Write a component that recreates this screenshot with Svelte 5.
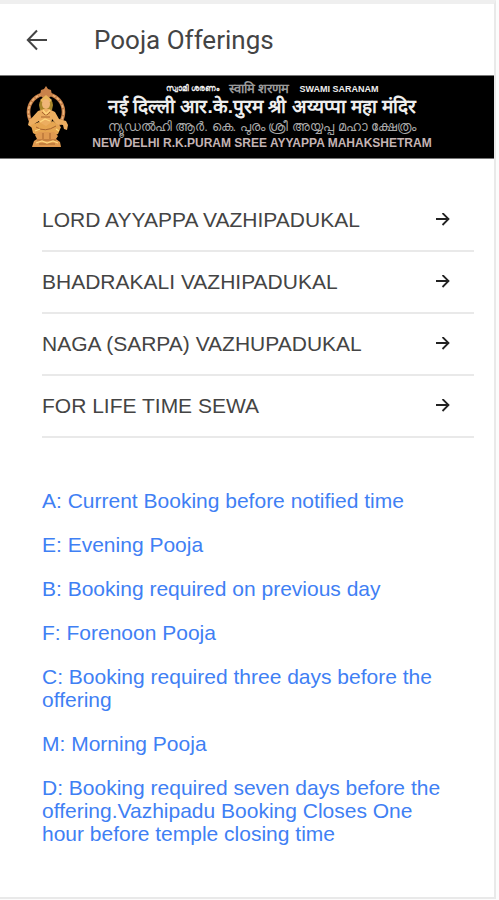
<script>
  const offerings = [
    'LORD AYYAPPA VAZHIPADUKAL',
    'BHADRAKALI VAZHIPADUKAL',
    'NAGA (SARPA) VAZHUPADUKAL',
    'FOR LIFE TIME SEWA'
  ];

  const notes = [
    'A: Current Booking before notified time',
    'E: Evening Pooja',
    'B: Booking required on previous day',
    'F: Forenoon Pooja',
    'C: Booking required three days before the offering',
    'M: Morning Pooja',
    'D: Booking required seven days before the offering.Vazhipadu Booking Closes One hour before temple closing time'
  ];
</script>

<div class="page">
  <header>
    <button class="back" aria-label="Back">
      <svg width="22" height="22" viewBox="0 0 22 22" aria-hidden="true">
        <path d="M21 11H2M11 1.5 1.8 11 11 20.5" fill="none" stroke="#444" stroke-width="2" />
      </svg>
    </button>
    <h1>Pooja Offerings</h1>
  </header>

  <div class="banner">
    <svg class="deity" width="44" height="62" viewBox="0 0 44 62" aria-hidden="true">
      <ellipse cx="20" cy="26" rx="17.5" ry="18" fill="none" stroke="#c27c45" stroke-width="3.6" />
      <ellipse cx="20" cy="26" rx="17.5" ry="18" fill="none" stroke="#efb57a" stroke-width="1.6" stroke-dasharray="3 1.5" />
      <path d="M20 0l2 3 3 1 1 5-3 3h-6l-3-3 1-5 3-1z" fill="#c9824a" />
      <path d="M13 19q0-6 7-7 7 1 7 7l-1 5H14z" fill="#a8862a" />
      <path d="M14 14l6-5 6 5-2 2h-8z" fill="#eab75b" />
      <ellipse cx="20" cy="18" rx="4" ry="5" fill="#efb577" />
      <path d="M12 25l6-2h5l6 3 4 7 7 2 2 4-1 5-3-1-1-4-7-1-4-5-1 8H14l-1-6-5 3 6 4-3 3-9-6 1-4z" fill="#ecae60" />
      <path d="M5 39l8-3 7 4 7-5 8 6-3 7-5 2-7-4-8 4-5-3z" fill="#e6a550" />
      <path d="M9 49l4-3h15l4 4-2 3 4 3 1 5H6l2-6 3-2z" fill="#e09a50" />
      <path d="M16 26q4 6 8 0M15 31h9M10 41q9 6 20-1M11 54h19M17 47v6M24 47v6M13 58h16" fill="none" stroke="#a8642e" stroke-width="1" />
      <path d="M17 24l3 4 4-4M14 36l5-3 5 2M9 45l5-2M30 43l3 2M10 57l6-2 5 2 6-2 5 2" fill="none" stroke="#ffd77d" stroke-width="1.3" />
    </svg>
    <div class="names">
      <div class="greeting">
        <span class="mal" lang="ml">സ്വാമി ശരണം</span>
        <span class="hin" lang="hi">स्वामि शरणम</span>
        <span class="eng">SWAMI SARANAM</span>
      </div>
      <div class="hindi" lang="hi">नई दिल्ली आर.के.पुरम श्री अय्यप्पा महा मंदिर</div>
      <div class="malayalam" lang="ml">ന്യൂഡൽഹി ആർ. കെ. പുരം ശ്രീ അയ്യപ്പ മഹാ ക്ഷേത്രം</div>
      <div class="english">NEW DELHI R.K.PURAM SREE AYYAPPA MAHAKSHETRAM</div>
    </div>
  </div>

  <main>
    <ul>
      {#each offerings as name}
        <li>
          <button class="offering">
            <span>{name}</span>
            <svg width="14" height="14" viewBox="0 0 14 14" aria-hidden="true">
              <path d="M0 6h12M6.5 0l6 6-6 6" fill="none" stroke="#222" stroke-width="1.8" />
            </svg>
          </button>
        </li>
      {/each}
    </ul>
    <section>
      {#each notes as note}
        <p>{note}</p>
      {/each}
    </section>
  </main>
</div>

<style>
  :global(body) {
    background: #fcfcfc;
  }
  .page {
    box-sizing: border-box;
    min-height: calc(100vh - 1px);
    margin-right: 3px;
    border-top: 4px solid #efefef;
    border-right: 2px solid #e9e9e9;
    border-bottom: 2px solid #e9e9e9;
    background: #fff;
    color: #444;
    font-family: 'Liberation Sans', Arial, sans-serif;
  }
  header {
    display: flex;
    align-items: center;
    gap: 46px;
    height: 71px;
    padding-left: 26px;
  }
  button {
    display: flex;
    align-items: center;
    padding: 0;
    border: 0;
    background: none;
    color: inherit;
    font: inherit;
    cursor: pointer;
  }
  h1 {
    margin: 0;
    font-family: Roboto, sans-serif;
    font-size: 26px;
    font-weight: 400;
    line-height: 30px;
  }
  .banner {
    display: flex;
    align-items: center;
    gap: 8px;
    box-sizing: border-box;
    height: 84px;
    padding-left: 26px;
    border-top: 1px solid #777;
    border-bottom: 1px solid #777;
    background: #000;
    color: #eee;
    white-space: nowrap;
  }
  .deity {
    flex: none;
  }
  .names {
    display: flex;
    flex-direction: column;
    align-items: center;
    width: 368px;
  }
  .greeting {
    display: flex;
    align-items: center;
    gap: 10px;
    height: 12px;
    padding-left: 20px;
    font-weight: 700;
  }
  .mal {
    font-size: 8px;
  }
  .hin {
    color: #999;
    font-size: 13px;
    line-height: 12px;
  }
  .eng {
    font-size: 9px;
  }
  .hindi {
    font-size: 19px;
    font-weight: 700;
    line-height: 24px;
  }
  .malayalam {
    color: #aaa;
    font-size: 13px;
    line-height: 16px;
  }
  .english {
    color: #c4b4b4;
    font-size: 12px;
    font-weight: 700;
    line-height: 16px;
  }
  main {
    padding: 31px 20px 31px 42px;
  }
  ul {
    margin: 0;
    padding: 0;
    list-style: none;
  }
  li {
    border-bottom: 2px solid #e9e9e9;
  }
  .offering {
    justify-content: space-between;
    width: 100%;
    height: 60px;
    padding-right: 24px;
    font-size: 21px;
    text-align: left;
  }
  section {
    margin-top: 51px;
    color: #3f80f4;
    font-size: 21px;
    line-height: 23px;
  }
  p {
    margin: 0 16px 21px 0;
  }
</style>
